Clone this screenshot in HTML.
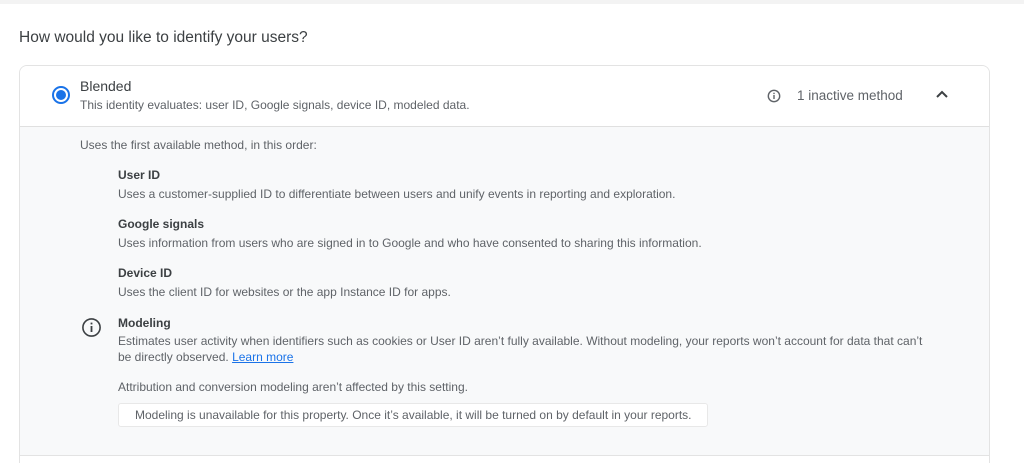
<!DOCTYPE html>
<html><head><style>
*{margin:0;padding:0;box-sizing:border-box}
html,body{width:1024px;height:463px;overflow:hidden}
body{background:#fff;font-family:"Liberation Sans",sans-serif;color:#5f6368;position:relative}
.a{position:absolute;white-space:nowrap}
.s{font-size:12px;color:#5f6368}
.h{font-size:12px;color:#3c4043;font-weight:bold}
</style></head><body>
<div class="a" style="left:0;top:0;width:1024px;height:4px;background:#f3f3f3"></div>
<div class="a" style="left:19px;top:29px;font-size:15.5px;color:#3c4043">How would you like to identify your users?</div>
<div class="a" style="left:19px;top:65px;width:971px;height:398px;border:1px solid #e3e3e3;border-bottom:none;border-radius:8px 8px 0 0;background:#f8f9fa;overflow:hidden">
  <div style="height:61px;background:#fff;border-bottom:1px solid #e0e0e0"></div>
  <div style="position:absolute;left:0;top:389px;width:971px;height:9px;background:#fff;border-top:1px solid #e3e3e3"></div>
</div>
<svg class="a" style="left:51px;top:85px" width="20" height="20"><circle cx="10" cy="10" r="8" fill="none" stroke="#1a73e8" stroke-width="2"/><circle cx="10" cy="10" r="5" fill="#1a73e8"/></svg>
<div class="a" style="left:80px;top:78px;font-size:14px;color:#3c4043">Blended</div>
<div class="a s" style="left:80px;top:98px">This identity evaluates: user ID, Google signals, device ID, modeled data.</div>
<svg class="a" style="left:767px;top:89px" width="14" height="14"><circle cx="7" cy="7" r="5.7" fill="none" stroke="#5f6368" stroke-width="1.4"/><rect x="6.3" y="6" width="1.4" height="4" fill="#5f6368"/><rect x="6.3" y="3.7" width="1.4" height="1.4" fill="#5f6368"/></svg>
<div class="a" style="left:797px;top:88px;font-size:13.5px;color:#5f6368">1 inactive method</div>
<svg class="a" style="left:935px;top:89px" width="14" height="10"><path d="M2 8 L7 3 L12 8" fill="none" stroke="#3c4043" stroke-width="2"/></svg>
<div class="a s" style="left:80px;top:138px">Uses the first available method, in this order:</div>
<div class="a h" style="left:118px;top:168px">User ID</div>
<div class="a s" style="left:118px;top:187px">Uses a customer-supplied ID to differentiate between users and unify events in reporting and exploration.</div>
<div class="a h" style="left:118px;top:217px">Google signals</div>
<div class="a s" style="left:118px;top:236px">Uses information from users who are signed in to Google and who have consented to sharing this information.</div>
<div class="a h" style="left:118px;top:266px">Device ID</div>
<div class="a s" style="left:118px;top:285px">Uses the client ID for websites or the app Instance ID for apps.</div>
<svg class="a" style="left:81px;top:317px" width="21" height="21"><circle cx="10.5" cy="10.5" r="8.6" fill="none" stroke="#3c4043" stroke-width="1.6"/><rect x="9.6" y="9" width="1.8" height="6" fill="#3c4043"/><rect x="9.6" y="5.6" width="1.8" height="1.8" fill="#3c4043"/></svg>
<div class="a h" style="left:118px;top:316px">Modeling</div>
<div class="a s" style="left:118px;top:334px">Estimates user activity when identifiers such as cookies or User ID aren’t fully available. Without modeling, your reports won’t account for data that can’t</div>
<div class="a s" style="left:118px;top:350px">be directly observed. <span style="color:#1a73e8;text-decoration:underline">Learn more</span></div>
<div class="a s" style="left:118px;top:380px">Attribution and conversion modeling aren’t affected by this setting.</div>
<div class="a s" style="left:118px;top:403px;width:590px;height:24px;background:#fff;border:1px solid #e8e8e8;border-radius:3px;padding:4px 0 0 16px">Modeling is unavailable for this property. Once it’s available, it will be turned on by default in your reports.</div>
</body></html>
